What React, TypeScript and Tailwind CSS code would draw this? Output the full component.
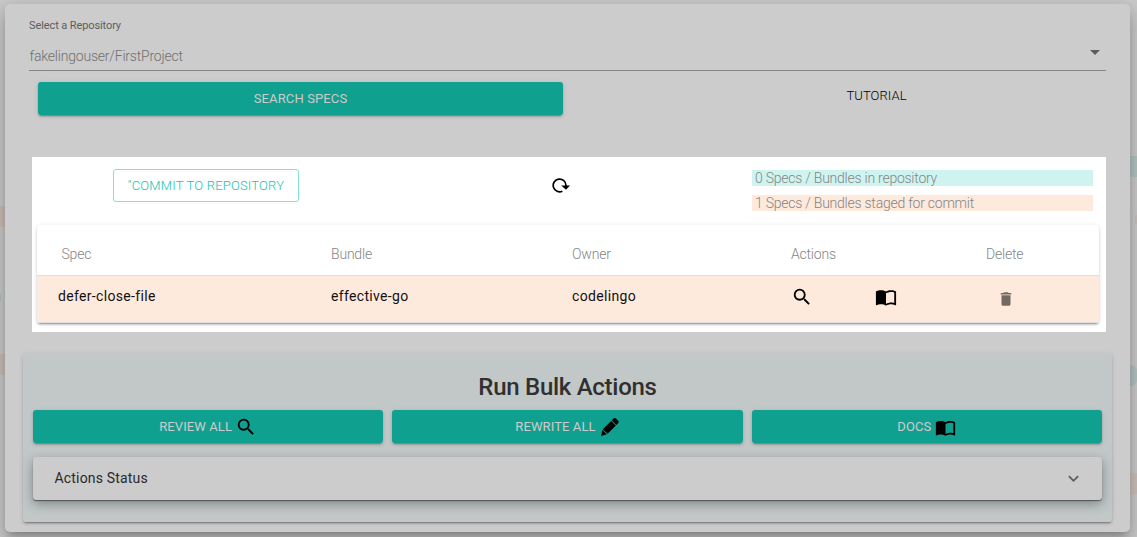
import type { ReactNode } from "react";
import { MdSearch, MdImportContacts, MdDelete, MdArrowDropDown, MdExpandMore } from "react-icons/md";

const raised =
  "shadow-[0_3px_1px_-2px_rgba(0,0,0,0.2),0_2px_2px_0_rgba(0,0,0,0.14),0_1px_5px_0_rgba(0,0,0,0.12)]";

function RefreshIcon() {
  return (
    <svg width="18" height="15" viewBox="0 0 18 15" className="block">
      <path d="M10.4 13.2A6.4 6.4 0 1 1 14 7.5V9" fill="none" stroke="#000" strokeWidth="1.7" />
      <path d="M9.2 7.4H18.2L14 11.8Z" fill="#000" />
    </svg>
  );
}

function PencilIcon() {
  return (
    <svg width="18" height="18" viewBox="0 0 18 18" className="block">
      <path d="M10.8 2.3 12.6.5a1.7 1.7 0 0 1 2.3 0l2.3 2.3a1.7 1.7 0 0 1 0 2.3l-1.8 1.8Z" />
      <path d="m10.2 2.9 4.7 4.6-8.3 8.2-1.7-1.7-1.4-.9-1.7-1.8Z" />
      <path d="m1.4 12 4.4 4.3L.1 18Z" />
    </svg>
  );
}

function BulkButton({ label, children }: { label: string; children: ReactNode }) {
  return (
    <button
      className={`flex h-[33px] flex-1 items-center justify-center rounded-[3px] bg-[#10a090] text-[13px] font-normal tracking-[0.1px] text-[#ccc] ${raised}`}
    >
      <span>{label}</span>
      {children}
    </button>
  );
}

export default function App() {
  return (
    <div className="relative h-[537px] w-[1137px] overflow-hidden bg-[#c9c9c9] pl-[5px] pr-[7px] pt-1 font-['Roboto',sans-serif]">
      <div className="absolute left-0 top-[206px] h-[21px] w-[6px] bg-[#cabdb5]" />
      <div className="absolute left-0 top-[294px] h-[8px] w-[1px] bg-[#b0c0bd]" />
      <div className="absolute left-0 top-[354px] h-[21px] w-[6px] bg-[#cabdb5]" />
      <div className="absolute right-0 top-[156px] h-[21px] w-[7px] bg-[#b2c3c0]" />
      <div className="absolute right-0 top-[215px] h-[9px] w-[2px] bg-[#ccc0b8]" />
      <div className="absolute right-0 top-[365px] h-[21px] w-[7px] rounded-r-[6px] bg-[#b2c3c0]" />
      <div className="absolute right-0 top-[473px] h-[21px] w-[7px] bg-[#ccc0b8]" />

      <main className="relative h-[528px] rounded-[5px] bg-[#ccc] shadow-[0_6px_7px_-4px_rgba(0,0,0,0.2),0_11px_15px_1px_rgba(0,0,0,0.14),0_4px_20px_3px_rgba(0,0,0,0.12)]">
        <div className="ml-6 mr-6 flex h-[67px] flex-col border-b border-[#858585] pt-[14px]">
          <label className="h-[15px] text-[11px] leading-[15px] tracking-[-0.1px] text-[#5c5c5c]">Select a Repository</label>
          <div className="flex h-[38px] items-center justify-between pt-[9px] text-sm font-light tracking-[-0.2px] text-[#707070]">
            <span className="mb-[2px] ml-[0.5px]">fakelingouser/FirstProject</span>
            <MdArrowDropDown className="mb-[9px] mr-[-1px] size-6 text-[#5c5c5c]" />
          </div>
        </div>

        <div className="flex pl-[33px] pt-[11px]">
          <button className={`h-[33px] w-[525px] shrink-0 rounded-[3px] bg-[#10a090] text-[13px] tracking-[0.12px] text-[#ccc] ${raised}`}>
            SEARCH SPECS
          </button>
          <button className="ml-[80px] h-[28px] w-[467px] shrink-0 text-[13px] font-light tracking-[0.08px] text-black">
            TUTORIAL
          </button>
        </div>

        <section className="ml-[27px] mt-[42px] h-[175px] w-[1074px] bg-white px-[5px]">
          <div className="flex h-[68px] pt-3">
            <button className="ml-[76px] h-[33px] w-[186px] rounded-[3px] border border-[#83e2d6] text-[13px] font-light tracking-[0.2px] text-[#14c3ae]">
              "COMMIT TO REPOSITORY
            </button>
            <div className="ml-[253px] mt-[9px] h-[15px]">
              <RefreshIcon />
            </div>
            <div className="ml-[182px] flex w-[341px] flex-col gap-[9px] pt-px text-sm font-light leading-4 tracking-[-0.24px] text-[#858585]">
              <div className="h-4 bg-[#cff4ef] pl-[3px]">0 Specs / Bundles in repository</div>
              <div className="h-4 bg-[#feeadd] pl-[3px]">1 Specs / Bundles staged for commit</div>
            </div>
          </div>

          <div className={`h-[98px] w-[1062px] overflow-hidden rounded-[3px] bg-white ${raised}`}>
            <div className="grid h-[51px] grid-cols-[294px_241px_219px_195px_113px] border-b border-[#dedede] pt-[21px] text-sm font-light leading-[17px] tracking-[-0.2px] text-[#858585]">
              <div className="pl-[24.5px]">Spec</div>
              <div>Bundle</div>
              <div>Owner</div>
              <div>Actions</div>
              <div>Delete</div>
            </div>
            <div className="grid h-[47px] grid-cols-[294px_241px_219px_195px_113px] border-b border-[#dedede] bg-[#feeadd] pt-[11px] text-sm leading-[18px] tracking-[0.33px] text-[#111]">
              <div className="pl-[21px]">defer-close-file</div>
              <div>effective-go</div>
              <div>codelingo</div>
              <div className="flex text-black">
                <MdSearch className="-mt-px size-[22px]" />
                <MdImportContacts className="-mt-px ml-[62px] size-[22px]" />
              </div>
              <div className="pl-[11px] pt-[3px]">
                <MdDelete className="size-[18px] text-[#736963]" />
              </div>
            </div>
          </div>
        </section>

        <section className={`ml-[18px] mt-[22px] h-[168px] w-[1089px] rounded-[3px] bg-[#c2c8c8] px-[10px] pt-[17px] ${raised}`}>
          <h2 className="h-[39px] text-center text-[24px] font-medium leading-[32px] tracking-[-0.28px] text-[#303030]">
            Run Bulk Actions
          </h2>
          <div className="flex gap-[9px]">
            <BulkButton label="REVIEW ALL">
              <MdSearch className="ml-[3px] size-[22px] text-black" />
            </BulkButton>
            <BulkButton label="REWRITE ALL">
              <span className="ml-[5px] mr-px text-black">
                <PencilIcon />
              </span>
            </BulkButton>
            <BulkButton label="DOCS">
              <MdImportContacts className="ml-[4px] mt-[2px] size-[21px] text-black" />
            </BulkButton>
          </div>
          <div className="mt-[14px] flex h-[43px] items-center justify-between rounded-[3px] bg-[#ccc] pl-[21.5px] pr-[18px] text-sm tracking-[0.18px] text-[#292929] shadow-[0_1px_1px_rgba(0,0,0,0.45),0_4px_12px_rgba(0,0,0,0.35)]">
            <span className="mb-[2px]">Actions Status</span>
            <MdExpandMore className="size-[21px] text-[#5c5c5c]" />
          </div>
        </section>
      </main>
    </div>
  );
}
